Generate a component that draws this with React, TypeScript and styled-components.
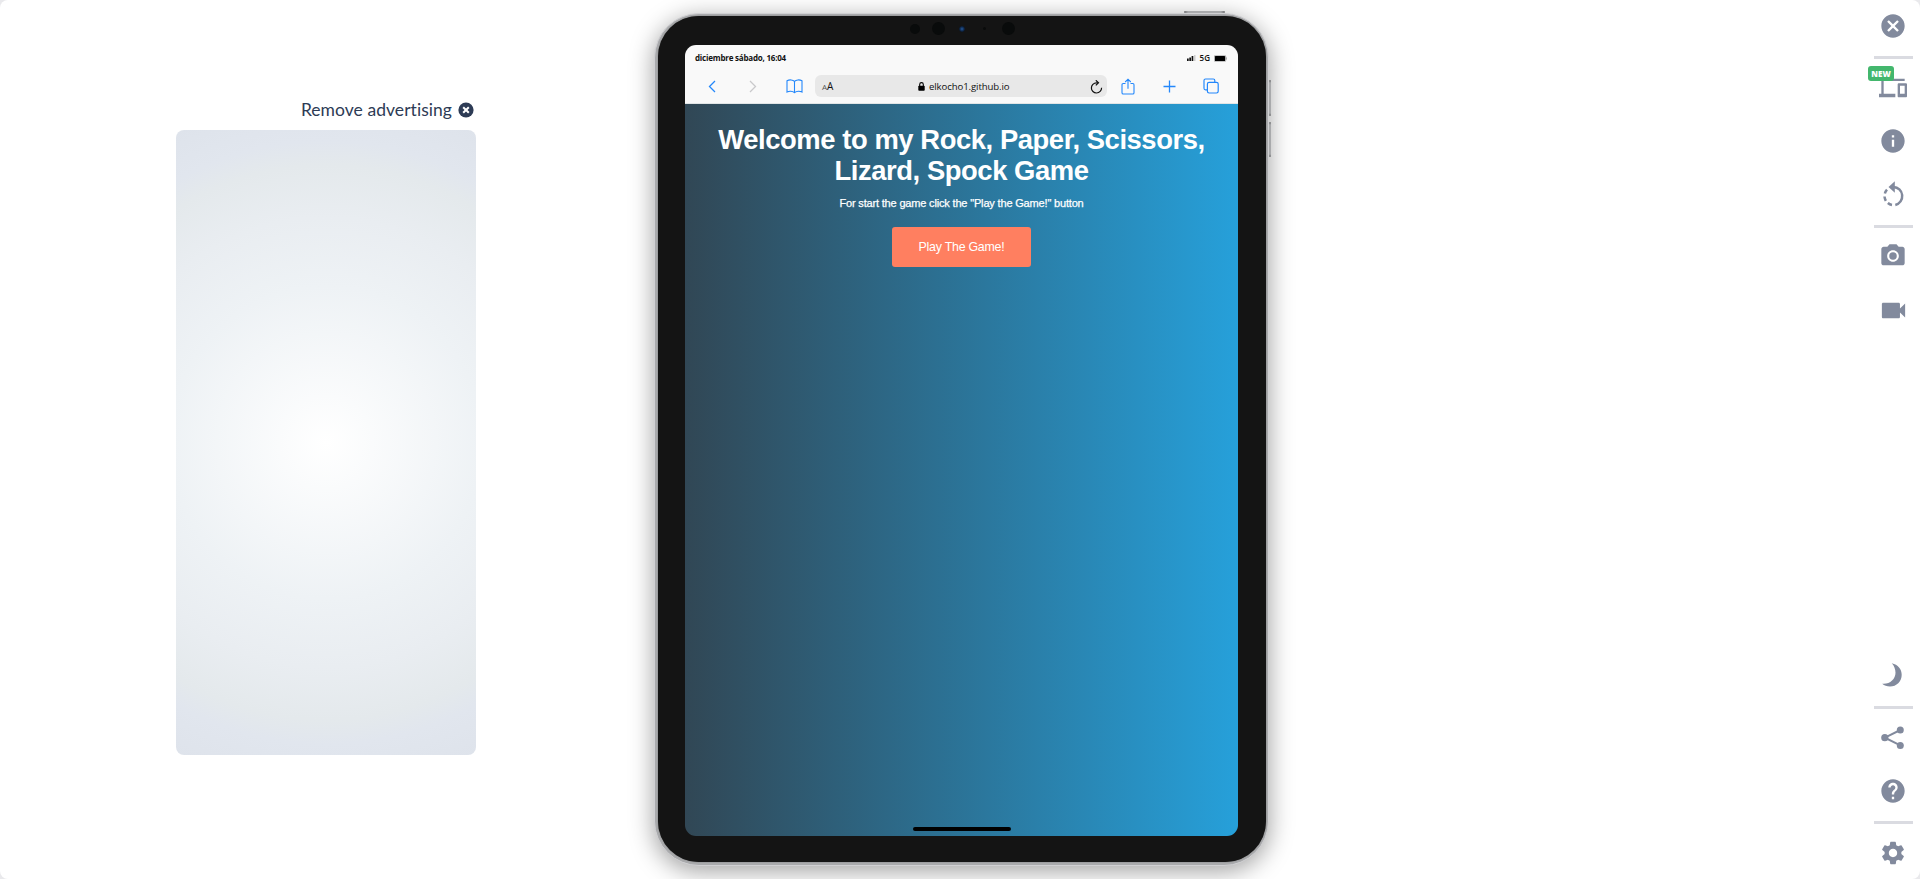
import React from 'react';
import styled, { createGlobalStyle } from 'styled-components';
import { MdCancel, MdDevices, MdInfo, MdPhotoCamera, MdVideocam, MdHelp, MdSettings } from 'react-icons/md';

const GlobalStyle = createGlobalStyle`
  * { box-sizing: border-box; }
  html, body { margin: 0; background: #e9e9ec; overflow: hidden; }
  h1, p { margin: 0; }
  button { border: 0; padding: 0; background: none; font: inherit; color: inherit; }
  svg { display: block; flex: none; }
`;

const Page = styled.div`
  display: grid;
  grid-template-columns: 654px 615px 1fr 46px;
  width: 1920px;
  height: 879px;
  background: #fff;
  border-radius: 8px;
  overflow: hidden;
`;

const AdColumn = styled.aside`
  display: flex;
  flex-direction: column;
  padding: 99px 178px 0 176px;
`;

const RemoveAd = styled.button`
  display: flex;
  align-items: center;
  justify-content: flex-end;
  height: 22px;
  padding-right: 2px;
  gap: 6px;
  color: #2d3b55;
  font: 17.5px/22px Lato, sans-serif;
  letter-spacing: 0.05px;
  white-space: nowrap;
`;

const AdPanel = styled.div`
  width: 300px;
  height: 625px;
  margin-top: 9px;
  border-radius: 8px;
  background: radial-gradient(circle at center, #ffffff 0%, #eef2f5 45%, #e9edf1 65%, #e4e9ec 80%, #e1e6ee 87%, #dee3eb 100%);
`;

const Tablet = styled.main`
  position: relative;
  width: 615px;
  height: 853px;
  margin-top: 13px;
  padding: 2px 2px 3px 3px;
  border-radius: 45px;
  background: #a9aaac;
  border: 1px solid #d0d0d3;
  box-shadow: 0 5px 24px rgba(0, 0, 0, 0.38);
`;

const HardwareKey = styled.i<{ $x: number; $y: number; $w: number; $h: number }>`
  position: absolute;
  left: ${p => p.$x}px;
  top: ${p => p.$y}px;
  width: ${p => p.$w}px;
  height: ${p => p.$h}px;
  border-radius: 1px;
  background: ${p => p.$w > p.$h
    ? 'linear-gradient(90deg, #6f7072, #a9aaac 10%, #a9aaac 90%, #6f7072)'
    : 'linear-gradient(180deg, #6f7072, #a9aaac 8%, #a9aaac 92%, #6f7072)'};
`;

const Bezel = styled.div`
  height: 846px;
  padding: 0 28px 26px 27px;
  border-radius: 41px;
  background: #141414;
  box-shadow: 0 0 1px #333;
`;

const CameraRow = styled.div`
  display: flex;
  align-items: center;
  height: 29px;
  padding: 0 0 4px 225px;
`;

const Lens = styled.i<{ $size: number; $after: number; $blue?: boolean }>`
  width: ${p => p.$size}px;
  height: ${p => p.$size}px;
  margin-right: ${p => p.$after}px;
  border-radius: 50%;
  background: ${p => (p.$blue ? 'radial-gradient(ellipse, #265a9b 0%, #12305a 40%, #08101a 80%)' : '#090b0b')};
`;

const Screen = styled.section`
  display: flex;
  flex-direction: column;
  width: 553px;
  height: 791px;
  border-radius: 11px;
  overflow: hidden;
`;

const Browser = styled.header`
  height: 59px;
  background: #f9f9f9;
  border-bottom: 1px solid #e1e5e6;
  color: #111;
`;

const StatusBar = styled.div`
  display: flex;
  align-items: center;
  justify-content: space-between;
  height: 25px;
  padding: 0 11px 0 10px;
  font: bold 8px/12px "Open Sans", sans-serif;
`;

const StatusDate = styled.span`
  letter-spacing: -0.21px;
  white-space: nowrap;
`;

const Signals = styled.div`
  display: flex;
  align-items: center;
  gap: 4px;
  padding-top: 1px;
  font-weight: 600;
`;

const Toolbar = styled.nav`
  display: flex;
  align-items: center;
  height: 32px;
  padding-left: 16px;
`;

const Tool = styled.button<{ $width: number; $muted?: boolean }>`
  display: flex;
  justify-content: center;
  width: ${p => p.$width}px;
  color: ${p => (p.$muted ? '#c9c9cb' : '#2488fb')};
`;

const Address = styled.div`
  display: flex;
  align-items: center;
  width: 292px;
  height: 22px;
  margin-left: 10px;
  padding: 1px 4px 0 7px;
  border-radius: 6px;
  background: #e8e8e8;
  font: 9.6px/14px "Open Sans", sans-serif;
`;

const TextSize = styled.span`
  width: 96px;
  font-size: 10px;
  small { font-size: 8px; color: #555; }
`;

const Url = styled.span`
  flex: 1;
  padding-left: 4px;
  letter-spacing: -0.1px;
`;

const Game = styled.div`
  display: flex;
  flex: 1;
  flex-direction: column;
  align-items: center;
  padding-top: 20px;
  background: linear-gradient(90deg, #314755, #26a0da);
  color: #fff;
  font-family: "Liberation Sans", Arial, sans-serif;
`;

const Title = styled.h1`
  font-size: 27.4px;
  line-height: 31px;
  letter-spacing: -0.43px;
  text-align: center;
  white-space: nowrap;
`;

const Hint = styled.p`
  margin-top: 9px;
  font-size: 11px;
  line-height: 16px;
  letter-spacing: -0.17px;
  -webkit-text-stroke: 0.25px #fff;
`;

const PlayButton = styled.button`
  width: 139px;
  height: 40px;
  margin-top: 16px;
  border-radius: 3px;
  background: #ff7f60;
  font-size: 12.4px;
  letter-spacing: -0.25px;
`;

const HomeBar = styled.i`
  width: 98px;
  height: 4px;
  margin: auto 0 5px 0;
  border-radius: 2px;
  background: #000;
`;

const Sidebar = styled.nav`
  grid-column: 4;
  display: flex;
  flex-direction: column;
  width: 39px;
  height: 879px;
  color: #828a9d;
`;

const Action = styled.button<{ $before: number; $inset?: number }>`
  position: relative;
  display: flex;
  align-items: center;
  padding-left: ${p => p.$inset ?? 5}px;
  height: 28px;
  margin-top: ${p => p.$before}px;
`;

const Divider = styled.i<{ $before: number }>`
  height: 3px;
  margin-top: ${p => p.$before}px;
  background: #dadbe1;
`;

const NewBadge = styled.span`
  position: absolute;
  left: -6px;
  top: -8px;
  width: 26px;
  height: 15px;
  border-radius: 3px;
  background: #43b76d;
  color: #fff;
  font: 800 8px/16px "Open Sans", sans-serif;
  text-align: center;
`;

const CloseBadge = () => (
  <svg width="16" height="16" viewBox="0 0 16 16">
    <circle cx="8" cy="8" r="7.6" fill="#2d3b55" />
    <path d="M5.2 5.2l5.6 5.6m0-5.6l-5.6 5.6" stroke="#fff" strokeWidth="2" />
  </svg>
);

const Chevron = ({ forward }: { forward?: boolean }) => (
  <svg width="8" height="13" viewBox="0 0 8 13" fill="none" stroke="currentColor" strokeWidth="1.3">
    <path d={forward ? 'M1 1l5.5 5.5L1 12' : 'M7 1L1.5 6.5L7 12'} />
  </svg>
);

const Book = () => (
  <svg width="17" height="15" viewBox="0 0 17 15" fill="none" stroke="currentColor" strokeWidth="1.1">
    <path d="M8.5 2.4C7 .7 3.5.4 1 1.8V13c2-1 5.5-1 7.5.7C10.5 12 14 12 16 13V1.8C13.5.4 10 .7 8.5 2.4V13.7" />
  </svg>
);

const Lock = () => (
  <svg width="7" height="9" viewBox="0 0 7 9">
    <rect x=".3" y="3.7" width="6.4" height="5" rx=".8" fill="#000" />
    <path d="M1.7 4V2.4a1.8 1.8 0 013.6 0V4" fill="none" stroke="#000" strokeWidth="1.1" />
  </svg>
);

const Reload = () => (
  <svg width="13" height="14" viewBox="0 0 13 14" fill="none" stroke="#111" strokeWidth="1.2">
    <path d="M11.6 7.8A5.1 5.1 0 116.5 2.8H8" />
    <path d="M5.8.3l2.7 2.5L5.8 5.4" />
  </svg>
);

const Upload = () => (
  <svg width="14" height="17" viewBox="0 0 14 17" fill="none" stroke="currentColor" strokeWidth="1.1">
    <path d="M4.5 5.5H2.2Q1 5.5 1 6.7v8Q1 16 2.2 16h9.6q1.2 0 1.2-1.3v-8q0-1.2-1.2-1.2H9.5M7 10.8V1.2M4.2 4L7 1.2L9.8 4" />
  </svg>
);

const Plus = () => (
  <svg width="13" height="13" viewBox="0 0 13 13" stroke="currentColor" strokeWidth="1.3">
    <path d="M6.5.5v12M.5 6.5h12" />
  </svg>
);

const Tabs = () => (
  <svg width="16" height="16" viewBox="0 0 16 16" fill="none" stroke="currentColor" strokeWidth="1.2">
    <rect x="4.4" y="4.4" width="10.8" height="10.6" rx="1.7" />
    <path d="M4 11.8H2.5Q1 11.8 1 10.3V2.5Q1 1 2.5 1h7.8q1.5 0 1.5 1.5V4" />
  </svg>
);

const Signal = () => (
  <svg width="9" height="6" viewBox="0 0 9 6" fill="#111">
    <path d="M0 3.5h1.7V6H0zM2.3 2.5h1.7V6H2.3zM4.6 1h1.7v5H4.6z" />
    <path d="M7.2 0h1.2v6H7.2z" fill="#c4c4c4" />
  </svg>
);

const Battery = () => (
  <svg width="13" height="7" viewBox="0 0 13 7">
    <rect x=".3" y=".3" width="11.4" height="6.4" rx="1.3" fill="#fff" stroke="#888" strokeWidth=".6" />
    <rect x=".9" y=".9" width="10.2" height="5.2" rx=".7" />
    <path d="M12.3 2.4v2.2" stroke="#888" strokeWidth=".8" />
  </svg>
);

const Moon = () => (
  <svg width="28" height="28" viewBox="0 0 28 28" fill="currentColor">
    <path d="M12.8 2.2C19 3.5 22.7 8.2 22.7 13.7C22.7 20.5 17.5 25.5 11 25.5C8 25.5 5.2 24.5 3.2 22.7C10.5 23.5 16.5 18.5 16.5 11.8C16.5 8.2 15.2 4.8 12.8 2.2Z" />
  </svg>
);

const Rotate = () => (
  <svg width="28" height="28" viewBox="0 0 28 28" fill="none" stroke="currentColor" strokeWidth="2.5">
    <path d="M14.5 5.9A9.2 9.2 0 0116.3 24" />
    <path d="M13 24A9.2 9.2 0 018 8.7" strokeDasharray="4.6 2.9" />
    <path d="M9.5 6L15.8 .3V11.7Z" fill="currentColor" stroke="none" />
  </svg>
);

const ShareNodes = () => (
  <svg width="28" height="28" viewBox="0 0 28 28" fill="currentColor">
    <path d="M21.3 6L5.9 13.7L21.3 21.4" fill="none" stroke="currentColor" strokeWidth="2" />
    <circle cx="5.8" cy="13.7" r="3.6" />
    <circle cx="21.3" cy="6" r="3.5" />
    <circle cx="21.3" cy="21.4" r="3.5" />
  </svg>
);

export default function App() {
  return (
    <>
      <GlobalStyle />
      <Page>
        <AdColumn>
          <RemoveAd>Remove advertising <CloseBadge /></RemoveAd>
          <AdPanel />
        </AdColumn>
        <Tablet>
          <HardwareKey $x={529} $y={-3} $w={41} $h={2} />
          <HardwareKey $x={614} $y={66} $w={2} $h={36} />
          <HardwareKey $x={614} $y={108} $w={2} $h={35} />
          <Bezel>
            <CameraRow>
              <Lens $size={10} $after={12} />
              <Lens $size={13} $after={14} />
              <Lens $size={6} $after={18} $blue />
              <Lens $size={3} $after={16} />
              <Lens $size={13} $after={0} />
            </CameraRow>
            <Screen>
              <Browser>
                <StatusBar>
                  <StatusDate>diciembre sábado, 16:04</StatusDate>
                  <Signals><Signal />5G<Battery /></Signals>
                </StatusBar>
                <Toolbar>
                  <Tool $width={21}><Chevron /></Tool>
                  <Tool $width={61} $muted><Chevron forward /></Tool>
                  <Tool $width={22}><Book /></Tool>
                  <Address>
                    <TextSize><small>A</small>A</TextSize>
                    <Lock />
                    <Url>elkocho1.github.io</Url>
                    <Reload />
                  </Address>
                  <Tool $width={41}><Upload /></Tool>
                  <Tool $width={42}><Plus /></Tool>
                  <Tool $width={41}><Tabs /></Tool>
                </Toolbar>
              </Browser>
              <Game>
                <Title>Welcome to my Rock, Paper, Scissors,<br />Lizard, Spock Game</Title>
                <Hint>For start the game click the "Play the Game!" button</Hint>
                <PlayButton>Play The Game!</PlayButton>
                <HomeBar />
              </Game>
            </Screen>
          </Bezel>
        </Tablet>
        <Sidebar>
          <Action $before={12}><MdCancel size={28} /></Action>
          <Divider $before={16} />
          <Action $before={15}><MdDevices size={28} /><NewBadge>NEW</NewBadge></Action>
          <Action $before={25}><MdInfo size={28} /></Action>
          <Action $before={26}><Rotate /></Action>
          <Divider $before={16} />
          <Action $before={14}><MdPhotoCamera size={28} /></Action>
          <Action $before={26} $inset={4}><MdVideocam size={31} /></Action>
          <Action $before={337}><Moon /></Action>
          <Divider $before={17} />
          <Action $before={15}><ShareNodes /></Action>
          <Action $before={25}><MdHelp size={28} /></Action>
          <Divider $before={16} />
          <Action $before={15}><MdSettings size={28} /></Action>
        </Sidebar>
      </Page>
    </>
  );
}
